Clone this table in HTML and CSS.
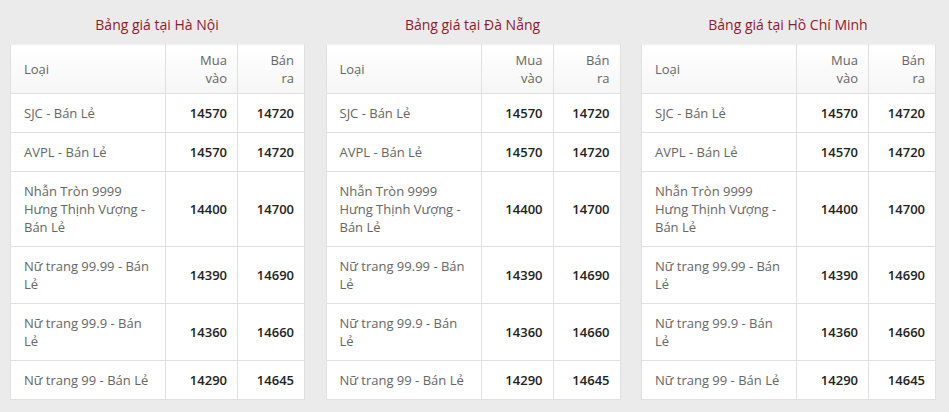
FILE: index.html
```html
<!DOCTYPE html>
<html lang="vi">
<head>
<meta charset="utf-8">
<link rel="stylesheet" href="styles.css">
</head>
<body>
<div class="boards">
  <section class="board">
    <h2 class="title">Bảng giá tại Hà Nội</h2>
    <table class="prices">
      <colgroup><col class="c-name"><col class="c-buy"><col class="c-sell"></colgroup>
      <thead><tr><th class="name">Loại</th><th>Mua vào</th><th>Bán ra</th></tr></thead>
      <tbody>
        <tr><td class="name">SJC - Bán Lẻ</td><td>14570</td><td>14720</td></tr>
        <tr><td class="name">AVPL - Bán Lẻ</td><td>14570</td><td>14720</td></tr>
        <tr><td class="name">Nhẫn Tròn 9999 Hưng Thịnh Vượng - Bán Lẻ</td><td>14400</td><td>14700</td></tr>
        <tr><td class="name">Nữ trang 99.99 - Bán Lẻ</td><td>14390</td><td>14690</td></tr>
        <tr><td class="name">Nữ trang 99.9 - Bán Lẻ</td><td>14360</td><td>14660</td></tr>
        <tr><td class="name">Nữ trang 99 - Bán Lẻ</td><td>14290</td><td>14645</td></tr>
      </tbody>
    </table>
  </section>
  <section class="board">
    <h2 class="title">Bảng giá tại Đà Nẵng</h2>
    <table class="prices">
      <colgroup><col class="c-name"><col class="c-buy"><col class="c-sell"></colgroup>
      <thead><tr><th class="name">Loại</th><th>Mua vào</th><th>Bán ra</th></tr></thead>
      <tbody>
        <tr><td class="name">SJC - Bán Lẻ</td><td>14570</td><td>14720</td></tr>
        <tr><td class="name">AVPL - Bán Lẻ</td><td>14570</td><td>14720</td></tr>
        <tr><td class="name">Nhẫn Tròn 9999 Hưng Thịnh Vượng - Bán Lẻ</td><td>14400</td><td>14700</td></tr>
        <tr><td class="name">Nữ trang 99.99 - Bán Lẻ</td><td>14390</td><td>14690</td></tr>
        <tr><td class="name">Nữ trang 99.9 - Bán Lẻ</td><td>14360</td><td>14660</td></tr>
        <tr><td class="name">Nữ trang 99 - Bán Lẻ</td><td>14290</td><td>14645</td></tr>
      </tbody>
    </table>
  </section>
  <section class="board">
    <h2 class="title">Bảng giá tại Hồ Chí Minh</h2>
    <table class="prices">
      <colgroup><col class="c-name"><col class="c-buy"><col class="c-sell"></colgroup>
      <thead><tr><th class="name">Loại</th><th>Mua vào</th><th>Bán ra</th></tr></thead>
      <tbody>
        <tr><td class="name">SJC - Bán Lẻ</td><td>14570</td><td>14720</td></tr>
        <tr><td class="name">AVPL - Bán Lẻ</td><td>14570</td><td>14720</td></tr>
        <tr><td class="name">Nhẫn Tròn 9999 Hưng Thịnh Vượng - Bán Lẻ</td><td>14400</td><td>14700</td></tr>
        <tr><td class="name">Nữ trang 99.99 - Bán Lẻ</td><td>14390</td><td>14690</td></tr>
        <tr><td class="name">Nữ trang 99.9 - Bán Lẻ</td><td>14360</td><td>14660</td></tr>
        <tr><td class="name">Nữ trang 99 - Bán Lẻ</td><td>14290</td><td>14645</td></tr>
      </tbody>
    </table>
  </section>
</div>
</body>
</html>
```

FILE: styles.css
```css
html, body {
  margin: 0;
  padding: 0;
  background: #ebebeb;
  font-family: "Open Sans", "Liberation Sans", sans-serif;
  font-size: 13px;
  line-height: 18px;
  color: #666;
}

.boards {
  display: grid;
  grid-template-columns: repeat(3, 294px);
  column-gap: 21.5px;
  padding: 15px 0 0 10px;
}

.title {
  margin: 0 0 9px;
  text-align: center;
  font-size: 14px;
  font-weight: 400;
  line-height: 20px;
  color: #8e1b2b;
}

.prices {
  width: 294px;
  border-collapse: collapse;
  table-layout: fixed;
  background: #fff;
}

.c-name { width: 155px; }
.c-buy { width: 72px; }
.c-sell { width: 67px; }

.prices th,
.prices td {
  border: 1px solid #e0e0e0;
  text-align: right;
  vertical-align: middle;
}

.prices th {
  padding: 6px 10px 6px 20px;
  font-weight: 400;
  color: #666;
  border-top-color: #f2f2f2;
  background: linear-gradient(to bottom, #ffffff 0%, #f6f6f6 100%);
}

.prices td {
  padding: 10px 10px;
  font-weight: 600;
  color: #222;
}

.prices .name {
  text-align: left;
  padding-left: 13px;
  font-weight: 400;
  color: #666;
}
```
